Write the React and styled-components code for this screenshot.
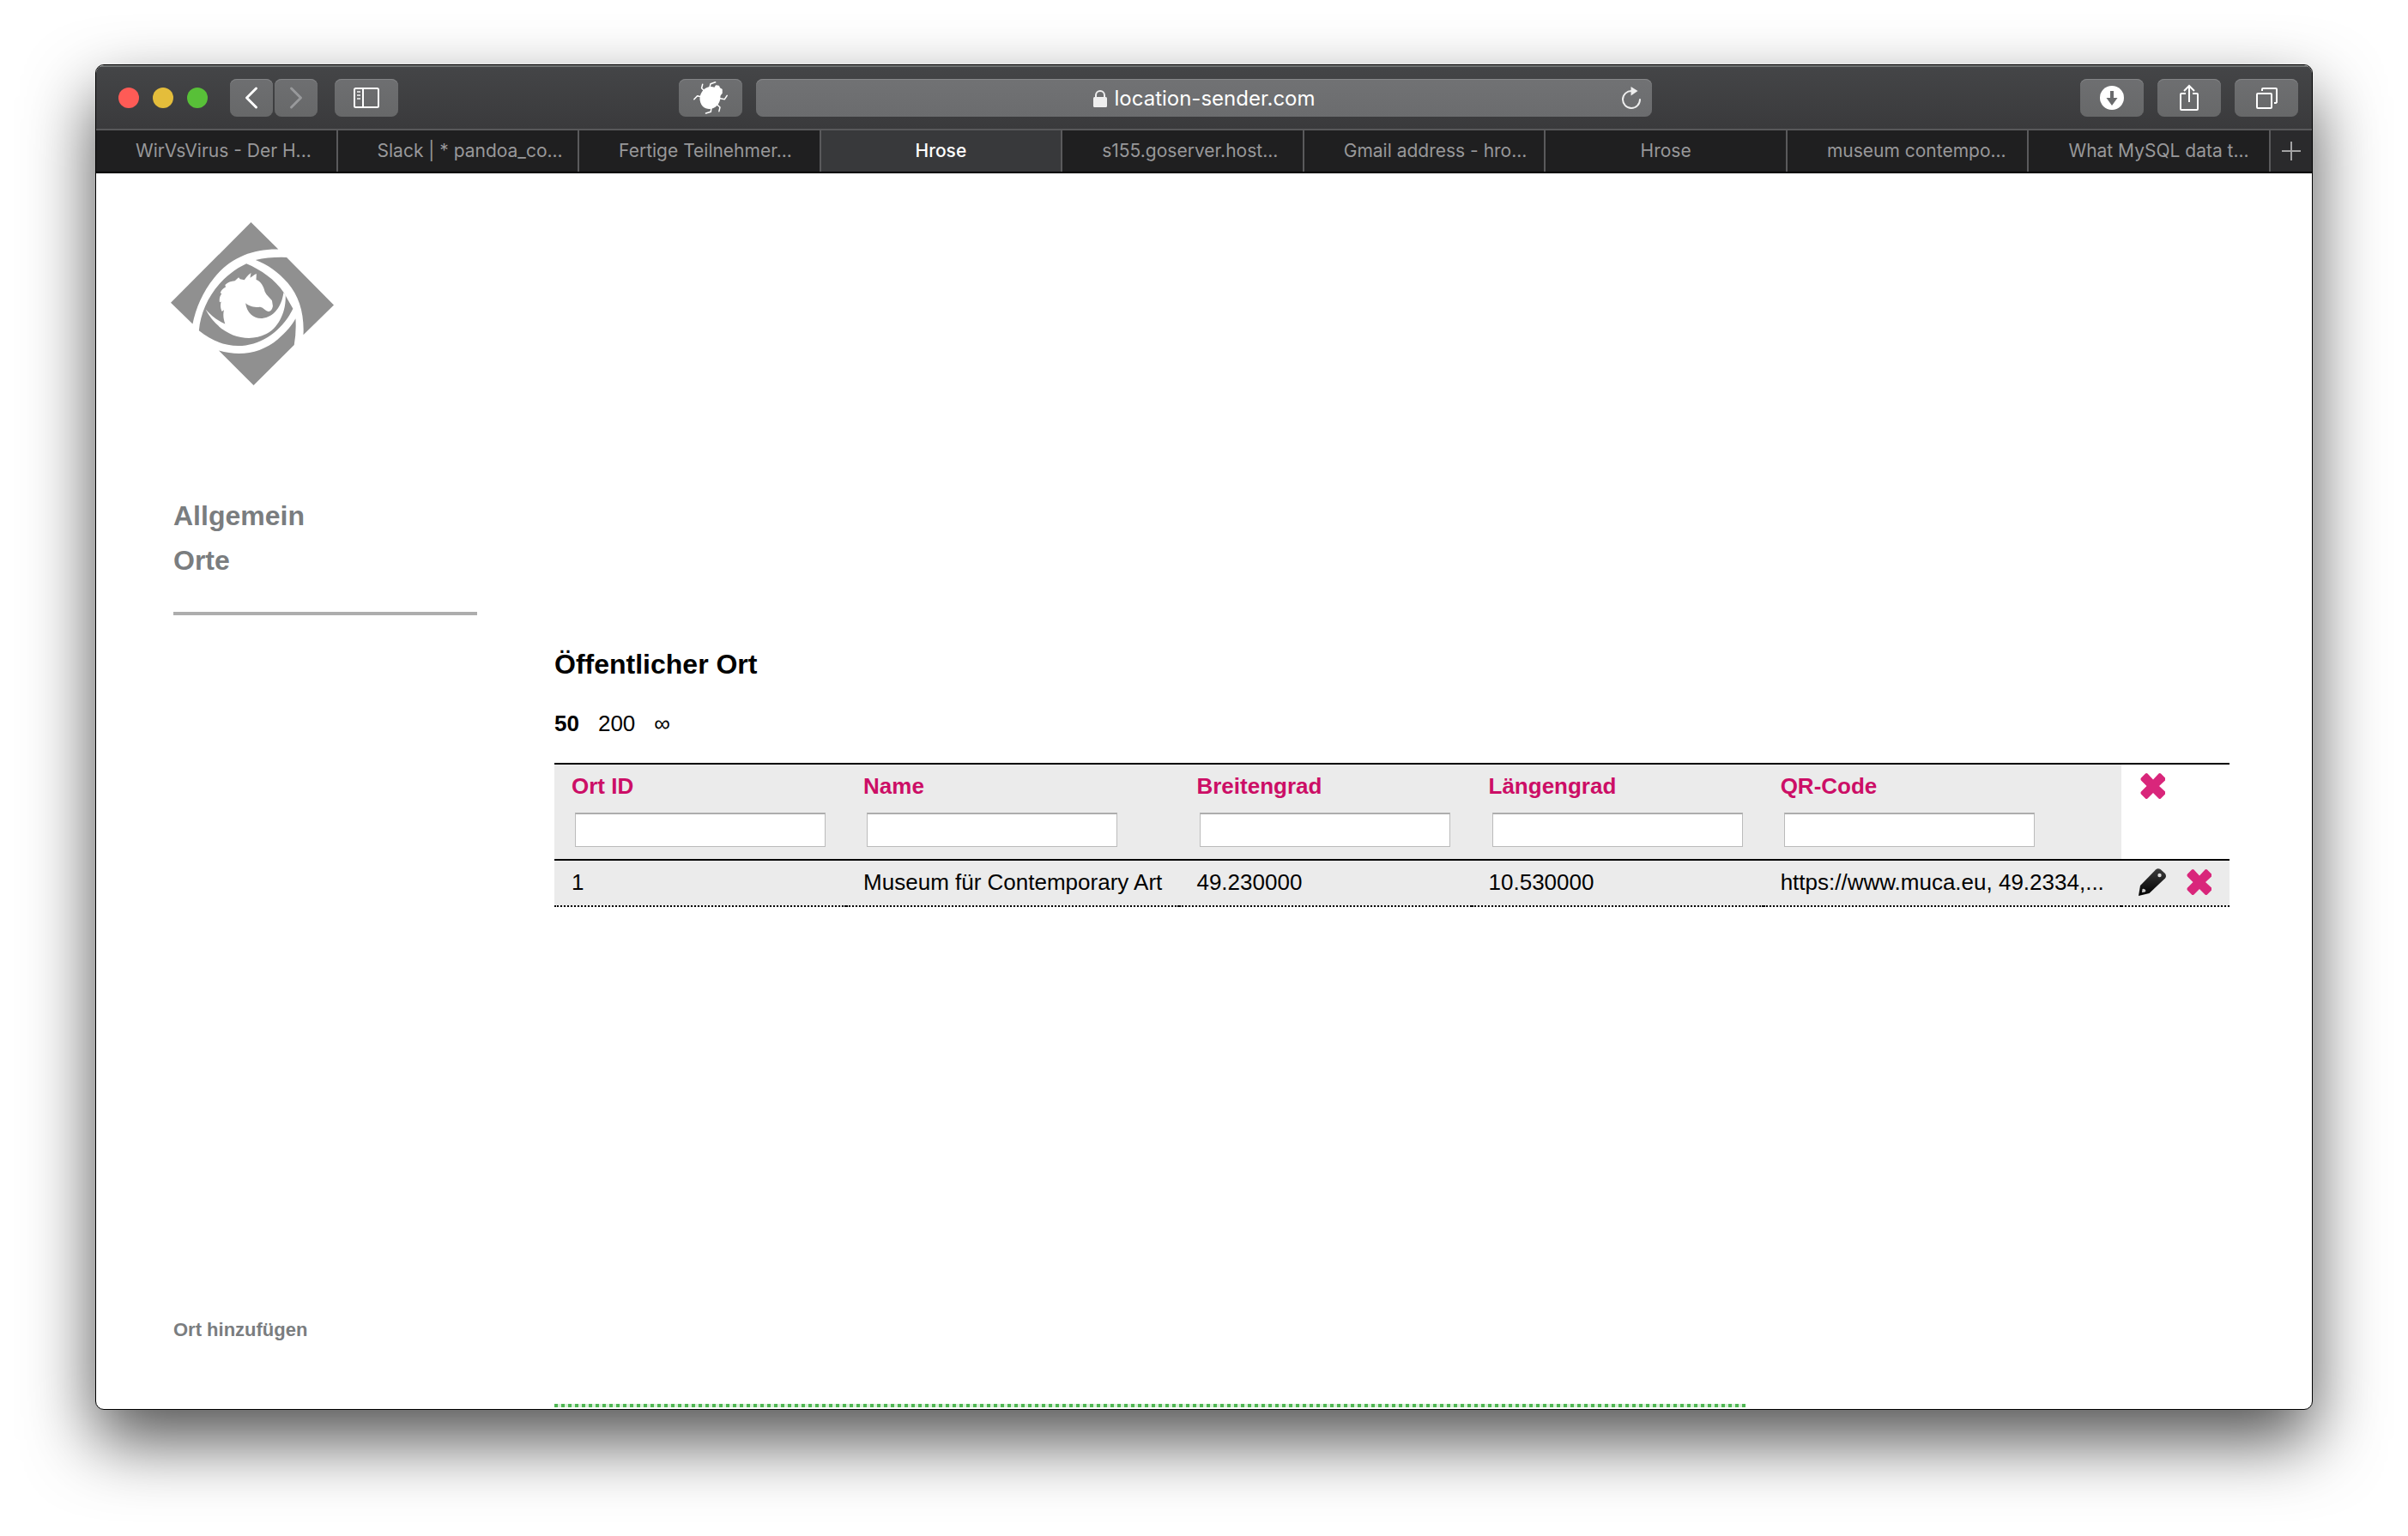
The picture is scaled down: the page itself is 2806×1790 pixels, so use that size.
import { useState } from 'react';
import styled, { createGlobalStyle } from 'styled-components';

const GlobalStyle = createGlobalStyle`
  * {
    box-sizing: border-box;
  }

  body {
    margin: 0;
    background: #ffffff;
    font-family: 'Liberation Sans', Arial, sans-serif;
  }

  button {
    padding: 0;
    border: 0;
    background: none;
    font: inherit;
    color: inherit;
  }

  a {
    color: inherit;
    text-decoration: none;
  }
`;

const BrowserWindow = styled.div`
  display: flex;
  flex-direction: column;
  min-height: calc(100vh - 222px);
  margin: 75px 111px 147px;
  border: 1px solid #000000;
  border-radius: 10px;
  background: #ffffff;
  box-shadow: 0 36px 80px rgba(0, 0, 0, 0.68);
  overflow: hidden;
`;

const Toolbar = styled.header`
  display: grid;
  grid-template-columns: minmax(0, 1fr) 40.4% minmax(0, 1fr);
  align-items: center;
  height: 76px;
  border-top: 2px solid #707373;
  border-bottom: 2px solid #58585a;
  background: linear-gradient(#444547, #3a3a3c);
  font-family: Inter, sans-serif;
`;

const ToolbarLeft = styled.div`
  display: flex;
  align-items: center;
  padding: 0 16px 0 26px;
`;

const ToolbarRight = styled.div`
  display: flex;
  justify-content: flex-end;
  gap: 16px;
  padding-right: 16px;
`;

const Lights = styled.div`
  display: flex;
  gap: 16px;
  margin-right: 26px;
`;

const Light = styled.button`
  width: 24px;
  height: 24px;
  border-radius: 50%;
  background: ${props => props.$color};
`;

const History = styled.div`
  display: flex;
  gap: 2px;
  margin-right: 20px;
`;

const ToolButton = styled.button`
  display: flex;
  align-items: center;
  justify-content: center;
  width: ${props => (props.$narrow ? '50px' : '74px')};
  height: 44px;
  margin-left: ${props => (props.$push ? 'auto' : '0')};
  border-radius: 8px;
  background: linear-gradient(#6e6f71, #676869);
  box-shadow: inset 0 1px #838486;
  color: ${props => (props.$muted ? '#98999b' : '#ffffff')};
`;

const AddressBar = styled.div`
  display: grid;
  grid-template-columns: 48px 1fr 48px;
  align-items: center;
  height: 44px;
  border-radius: 8px;
  background: linear-gradient(#717274, #6b6c6e);
  box-shadow: inset 0 1px #868789;
  color: #eeeeee;
`;

const Address = styled.label`
  grid-column: 2;
  display: flex;
  align-items: center;
  justify-content: center;
  gap: 9px;
  padding-top: 2px;
`;

const AddressInput = styled.input`
  field-sizing: content;
  padding: 0;
  border: 0;
  outline: 0;
  background: none;
  color: #ffffff;
  font: 24px/32px Inter, sans-serif;
`;

const Reload = styled.button`
  display: flex;
  justify-content: center;
`;

const TabBar = styled.nav`
  display: grid;
  grid-template-columns: repeat(9, minmax(0, 1fr)) 48px;
  height: 50px;
  border-bottom: 2px solid #000000;
  background: #1f1f20;
  font: 21px/48px Inter, sans-serif;
  color: #98989a;
`;

const Tab = styled.a`
  padding-left: ${props => (props.$long ? '46px' : '0')};
  border-right: 2px solid #5a5a5c;
  background: ${props => (props.$active ? '#38393b' : 'transparent')};
  color: ${props => (props.$active ? '#ffffff' : 'inherit')};
  font-weight: ${props => (props.$active ? 500 : 400)};
  text-align: ${props => (props.$long ? 'left' : 'center')};
  white-space: nowrap;
  overflow: hidden;
`;

const NewTab = styled.button`
  display: flex;
  align-items: center;
  justify-content: center;
  background: #2a2a2c;
`;

const Page = styled.div`
  flex: 1;
  display: grid;
  grid-template-columns: 354px minmax(0, 1fr);
  column-gap: 90px;
  padding: 0 96px 2px 90px;
`;

const Sidebar = styled.aside`
  display: flex;
  flex-direction: column;
  padding: 57px 0 77px;
  color: #7a7d7f;
  font-weight: bold;
`;

const LogoLink = styled.a`
  width: 190px;
  height: 190px;
  margin-left: -3px;
`;

const Menu = styled.nav`
  display: flex;
  flex-direction: column;
  margin-top: 126px;
  padding-bottom: 34px;
  border-bottom: 4px solid #adadad;
  font-size: 32px;
  line-height: 52px;
`;

const AddLink = styled.a`
  margin-top: auto;
  font-size: 22px;
  line-height: 26px;
`;

const Main = styled.main`
  display: flex;
  flex-direction: column;
  align-items: flex-start;
  padding-top: 554px;
  color: #000000;
  font-size: 26px;
  line-height: 30px;
`;

const Title = styled.h1`
  margin: 0 0 36px;
  font-size: 32px;
  line-height: 36px;
`;

const Pager = styled.div`
  display: flex;
  gap: 22px;
  margin-bottom: 31px;
`;

const PageSize = styled.a`
  font-weight: ${props => (props.$current ? 'bold' : 'normal')};
`;

const Table = styled.table`
  width: 100%;
  border-spacing: 0;
  text-align: left;
  white-space: nowrap;
`;

const HeadCell = styled.th`
  padding: 10px 20px 14px;
  border-top: 2px solid #000000;
  border-bottom: 2px solid #000000;
  background: ${props => (props.$plain ? '#ffffff' : '#ebebeb')};
  color: #cc0e66;
  vertical-align: top;
`;

const Filter = styled.input`
  display: block;
  width: 292px;
  height: 40px;
  margin: 16px 4px 0;
  padding: 0 8px;
  border: 1px solid #bbbbbb;
  border-top: 2px solid #adadad;
  background: #ffffff;
  font: inherit;
  font-weight: normal;
`;

const Cell = styled.td`
  padding: 10px 20px 12px;
  border-bottom: 2px dotted #000000;
  background: #ebebeb;
`;

const Actions = styled.div`
  display: flex;
  align-items: center;
  gap: 22px;
  height: 30px;
`;

const IconButton = styled.button`
  display: flex;
  flex: none;
`;

const Divider = styled.div`
  width: 1388px;
  max-width: 100%;
  height: 4px;
  margin-top: auto;
  background: repeating-linear-gradient(
    90deg,
    #4fb753 0 4px,
    #d9f0da 4px 8px
  );
`;

const tabs = [
  { title: 'WirVsVirus - Der H...', long: true },
  { title: 'Slack | * pandoa_co...', long: true },
  { title: 'Fertige Teilnehmer...', long: true },
  { title: 'Hrose', active: true },
  { title: 's155.goserver.host...', long: true },
  { title: 'Gmail address - hro...', long: true },
  { title: 'Hrose' },
  { title: 'museum contempo...', long: true },
  { title: 'What MySQL data t...', long: true },
];

const columns = [
  { key: 'id', label: 'Ort ID' },
  { key: 'name', label: 'Name' },
  { key: 'lat', label: 'Breitengrad' },
  { key: 'lng', label: 'Längengrad' },
  { key: 'qr', label: 'QR-Code' },
];

const places = [
  {
    id: '1',
    name: 'Museum für Contemporary Art',
    lat: '49.230000',
    lng: '10.530000',
    qr: 'https://www.muca.eu, 49.2334,...',
  },
];

function Chevron({ left }) {
  return (
    <svg width="16" height="28" viewBox="0 0 16 28" fill="none" stroke="currentColor" strokeWidth="3" strokeLinecap="round" strokeLinejoin="round">
      <path d={left ? 'M13.5 3L2.5 14l11 11' : 'M2.5 3l11 11-11 11'} />
    </svg>
  );
}

function SidebarIcon() {
  return (
    <svg width="30" height="24" viewBox="0 0 30 24" fill="none" stroke="currentColor">
      <rect x="1" y="1" width="28" height="22" rx="1.5" strokeWidth="2" />
      <path d="M11 1v22" strokeWidth="2" />
      <path d="M4 5h4M4 9h4M4 13h4" strokeWidth="2" opacity="0.7" />
    </svg>
  );
}

function BugIcon() {
  return (
    <svg width="40" height="38" viewBox="0 0 40 38" fill="none" stroke="currentColor" strokeWidth="1.5" strokeLinecap="round" strokeLinejoin="round">
      <ellipse cx="19.5" cy="19" rx="11" ry="12.5" transform="rotate(22 19.5 19)" fill="currentColor" />
      <path d="M21 9l4-1.5 1.5-2.5 3 .5 1 2.500 2.500 1.500v4l-2.500 3z" fill="currentColor" />
      <path d="M.8 20.700L4.600 16.700l4.200 1M10.700 3.300l-1.100 4.400 3 3M25.600.8L20 2.700l-1.200 5M39.200 16.300l-2.800 4.400-5-1M29.900 34.700L31 30l-3-2.700M14.500 37l5.800-1.700L21 30" />
    </svg>
  );
}

function LockIcon() {
  return (
    <svg width="16" height="20" viewBox="0 0 16 20">
      <rect y="8" width="16" height="12" rx="1.5" fill="currentColor" />
      <path d="M3 9V6a5 5 0 0 1 10 0v3" fill="none" stroke="currentColor" strokeWidth="2" />
    </svg>
  );
}

function ReloadIcon() {
  return (
    <svg width="24" height="26" viewBox="0 0 24 26" fill="none">
      <path d="M12.500 5a10 10 0 1 0 9.500 10" stroke="currentColor" strokeWidth="2" strokeLinecap="round" />
      <path d="M11.500 0l8 5-8 5.500z" fill="currentColor" />
    </svg>
  );
}

function DownloadIcon() {
  return (
    <svg width="28" height="28" viewBox="0 0 28 28">
      <circle cx="14" cy="14" r="14" fill="currentColor" />
      <path d="M12 6h4v8h4.500L14 23 7.500 14H12z" fill="#6a6b6d" />
    </svg>
  );
}

function ShareIcon() {
  return (
    <svg width="24" height="32" viewBox="0 0 24 32" fill="none" stroke="currentColor" strokeWidth="2">
      <path d="M8 11H3a1 1 0 0 0-1 1v17a1 1 0 0 0 1 1h18a1 1 0 0 0 1-1V12a1 1 0 0 0-1-1h-5" />
      <path d="M12 21V2M6 8l6-6 6 6" />
    </svg>
  );
}

function TabsIcon() {
  return (
    <svg width="26" height="26" viewBox="0 0 26 26" fill="none" stroke="currentColor" strokeWidth="2">
      <rect x="2" y="8" width="17" height="17" rx="1" />
      <path d="M8 5V3a1 1 0 0 1 1-1h15a1 1 0 0 1 1 1v15l-1 1h-2" />
    </svg>
  );
}

function PlusIcon() {
  return (
    <svg width="22" height="22" viewBox="0 0 22 22" stroke="#a3a3a4" strokeWidth="2">
      <path d="M11 0v22M0 11h22" />
    </svg>
  );
}

function CrossIcon() {
  return (
    <svg width="32" height="32" viewBox="0 0 32 32">
      <path d="M8 1.500c.8-.7 1.700-.7 2.500 0L17 8.500l6.500-7c.8-.7 1.700-.7 2.500 0l5 5v3L24 16l7 6.500v3l-5 5c-.8.7-1.700.7-2.500 0L17 24l-6.500 6.500c-.8.7-1.700.7-2.500 0l-5-5c-.7-1-.7-2 0-3L9.500 16 3 9.500c-.7-1-.7-2 0-3z" fill="#d9267b" />
    </svg>
  );
}

function PencilIcon() {
  return (
    <svg width="32" height="32" viewBox="0 0 32 32">
      <defs>
        <linearGradient id="lead" x2="0" y2="1">
          <stop offset="0" stopColor="#3c3c3c" />
          <stop offset="1" stopColor="#000000" />
        </linearGradient>
      </defs>
      <path d="M0 32l2-12L20 1.500Q22.500-.8 25.500 1L31 6q2 3 0 5.500L12.500 29z" fill="url(#lead)" />
      <circle cx="24.500" cy="8" r="2.200" fill="#dddddd" />
      <path d="M4.500 24q2.500-1 4 2l-1 1.500-3.500.5z" fill="#cccccc" />
    </svg>
  );
}

function Logo() {
  return (
    <svg width="190" height="190" viewBox="57 57 567 567">
      <g fill="#909090">
        <path d="M57 337L336 57l95 94C340 149 262 182 208 250 168 300 144 355 133 411z" />
        <path d="M352 188q48-11 108-9l164 166-106 104c4-74-15-136-54-181-33-38-69-64-112-80z" />
        <path d="M224 503c77 22 147 9 205-39 29-24 49-48 62-72q3 46-5 92L345 624z" />
        <path d="M320 201c50 21 101 56 130 101l32 56c-30 62-91 118-164 127-62 8-117-13-163-51 8-94 69-188 165-233z" />
      </g>
      <path
        d="M178 360C198 383 220 399 246 411C240 394 238 377 242 362L235 367C229 355 229 343 232 333L227 335C225 325 227 315 234 305L229 303C233 292 239 286 248 282L246 275C255 266 268 262 280 261L293 249L298 255L313 258C318 250 323 243 336 233L333 250C341 246 346 240 355 236L354 257C370 262 380 280 384 298C390 312 402 320 409 329L412 349C410 361 404 368 396 367C385 367 381 354 368 352C350 353 330 350 317 338C322 372 345 393 375 391C415 388 443 350 449 302L456 310C459 370 430 425 388 446C320 480 225 450 178 360Z"
        fill="#ffffff"
      />
    </svg>
  );
}

export default function App() {
  const [address, setAddress] = useState('location-sender.com');

  return (
    <>
      <GlobalStyle />
      <BrowserWindow>
        <Toolbar>
          <ToolbarLeft>
            <Lights>
              <Light $color="#fe5b56" aria-label="Schließen" />
              <Light $color="#e4bd3b" aria-label="Minimieren" />
              <Light $color="#58c038" aria-label="Vollbild" />
            </Lights>
            <History>
              <ToolButton $narrow aria-label="Zurück">
                <Chevron left />
              </ToolButton>
              <ToolButton $narrow $muted aria-label="Vorwärts">
                <Chevron />
              </ToolButton>
            </History>
            <ToolButton aria-label="Seitenleiste">
              <SidebarIcon />
            </ToolButton>
            <ToolButton $push aria-label="Erweiterung">
              <BugIcon />
            </ToolButton>
          </ToolbarLeft>
          <AddressBar>
            <Address>
              <LockIcon />
              <AddressInput
                aria-label="Adresse"
                value={address}
                onChange={e => setAddress(e.target.value)}
              />
            </Address>
            <Reload aria-label="Neu laden">
              <ReloadIcon />
            </Reload>
          </AddressBar>
          <ToolbarRight>
            <ToolButton aria-label="Downloads">
              <DownloadIcon />
            </ToolButton>
            <ToolButton aria-label="Teilen">
              <ShareIcon />
            </ToolButton>
            <ToolButton aria-label="Tabübersicht">
              <TabsIcon />
            </ToolButton>
          </ToolbarRight>
        </Toolbar>
        <TabBar>
          {tabs.map((tab, index) => (
            <Tab key={index} href="#" $long={tab.long} $active={tab.active}>
              {tab.title}
            </Tab>
          ))}
          <NewTab aria-label="Neuer Tab">
            <PlusIcon />
          </NewTab>
        </TabBar>
        <Page>
          <Sidebar>
            <LogoLink href="#" aria-label="Hrose">
              <Logo />
            </LogoLink>
            <Menu>
              <a href="#">Allgemein</a>
              <a href="#">Orte</a>
            </Menu>
            <AddLink href="#">Ort hinzufügen</AddLink>
          </Sidebar>
          <Main>
            <Title>Öffentlicher Ort</Title>
            <Pager>
              <PageSize href="#" $current>
                50
              </PageSize>
              <PageSize href="#">200</PageSize>
              <PageSize href="#">∞</PageSize>
            </Pager>
            <Table>
              <thead>
                <tr>
                  {columns.map(column => (
                    <HeadCell key={column.key}>
                      <label htmlFor={column.key}>{column.label}</label>
                      <Filter id={column.key} type="text" />
                    </HeadCell>
                  ))}
                  <HeadCell $plain>
                    <Actions>
                      <IconButton aria-label="Filter löschen">
                        <CrossIcon />
                      </IconButton>
                    </Actions>
                  </HeadCell>
                </tr>
              </thead>
              <tbody>
                {places.map(place => (
                  <tr key={place.id}>
                    {columns.map(column => (
                      <Cell key={column.key}>{place[column.key]}</Cell>
                    ))}
                    <Cell>
                      <Actions>
                        <IconButton aria-label="Bearbeiten">
                          <PencilIcon />
                        </IconButton>
                        <IconButton aria-label="Löschen">
                          <CrossIcon />
                        </IconButton>
                      </Actions>
                    </Cell>
                  </tr>
                ))}
              </tbody>
            </Table>
            <Divider />
          </Main>
        </Page>
      </BrowserWindow>
    </>
  );
}
